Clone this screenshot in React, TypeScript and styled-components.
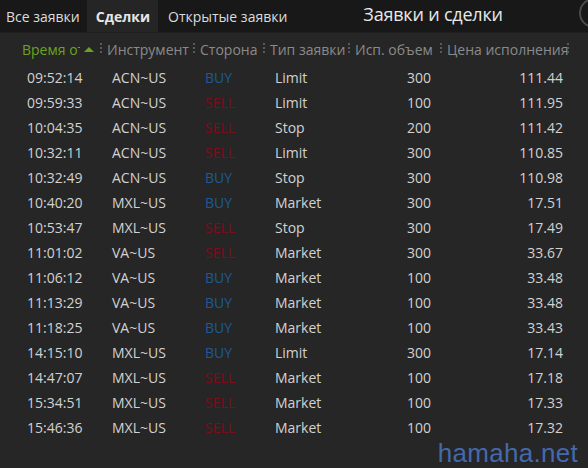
import styled, { createGlobalStyle } from 'styled-components';

type Side = 'BUY' | 'SELL';
type Trade = [string, string, Side, string, number, string];

const trades: Trade[] = [
  ['09:52:14', 'ACN~US', 'BUY', 'Limit', 300, '111.44'],
  ['09:59:33', 'ACN~US', 'SELL', 'Limit', 100, '111.95'],
  ['10:04:35', 'ACN~US', 'SELL', 'Stop', 200, '111.42'],
  ['10:32:11', 'ACN~US', 'SELL', 'Limit', 300, '110.85'],
  ['10:32:49', 'ACN~US', 'BUY', 'Stop', 300, '110.98'],
  ['10:40:20', 'MXL~US', 'BUY', 'Market', 300, '17.51'],
  ['10:53:47', 'MXL~US', 'SELL', 'Stop', 300, '17.49'],
  ['11:01:02', 'VA~US', 'SELL', 'Market', 300, '33.67'],
  ['11:06:12', 'VA~US', 'BUY', 'Market', 100, '33.48'],
  ['11:13:29', 'VA~US', 'BUY', 'Market', 100, '33.48'],
  ['11:18:25', 'VA~US', 'BUY', 'Market', 100, '33.43'],
  ['14:15:10', 'MXL~US', 'BUY', 'Limit', 300, '17.14'],
  ['14:47:07', 'MXL~US', 'SELL', 'Market', 100, '17.18'],
  ['15:34:51', 'MXL~US', 'SELL', 'Market', 100, '17.33'],
  ['15:46:36', 'MXL~US', 'SELL', 'Market', 100, '17.32'],
];

const COLS = '17px 85px 93px 70px 85px 92px 127px';

const GlobalStyles = createGlobalStyle`
  body {
    margin: 0;
    background: #262626;
    font-family: 'Open Sans', 'Noto Sans', sans-serif;
  }
`;

function App() {
  return (
    <>
      <GlobalStyles />
      <Screen>
        <TopBar>
          <Tab first>Все заявки</Tab>
          <Tab active>Сделки</Tab>
          <Tab>Открытые заявки</Tab>
          <Title>Заявки и сделки</Title>
          <CircleButton />
        </TopBar>

        <HeaderRow>
          <span />
          <HeadCell sorted>
            <HeadText>Время от</HeadText>
            <SortArrow />
          </HeadCell>
          <HeadCell>Инструмент</HeadCell>
          <HeadCell>Сторона</HeadCell>
          <HeadCell>Тип заявки</HeadCell>
          <HeadCell>Исп. объем</HeadCell>
          <HeadCell>Цена исполнения</HeadCell>
        </HeaderRow>

        {trades.map(([time, sym, side, type, qty, price]) => (
          <Row key={time}>
            <span />
            <Cell>{time}</Cell>
            <Cell>{sym}</Cell>
            <SideCell side={side}>{side}</SideCell>
            <Cell>{type}</Cell>
            <NumCell gap={11}>{qty}</NumCell>
            <NumCell gap={6}>{price}</NumCell>
          </Row>
        ))}

        <Watermark>hamaha.net</Watermark>
      </Screen>
    </>
  );
}

const Screen = styled.div`
  position: relative;
  width: 588px;
  height: 468px;
  overflow: hidden;
  background: #262626;
`;

const TopBar = styled.div`
  display: flex;
  align-items: stretch;
  height: 32px;
  background: #181818;
  border-bottom: 1px solid #1f1f1f;
`;

const Tab = styled.div<{ active?: boolean; first?: boolean }>`
  display: flex;
  align-items: center;
  padding: 0 ${(p) => (p.active ? 8 : 7)}px 0 ${(p) => (p.first ? 6 : p.active ? 9 : 10)}px;
  font-size: 14px;
  font-weight: ${(p) => (p.active ? 700 : 400)};
  color: ${(p) => (p.active ? '#e6e6e6' : '#dcdcdc')};
  background: ${(p) => (p.active ? '#252525' : 'transparent')};
`;

const Title = styled.div`
  display: flex;
  align-items: center;
  margin-left: 69px;
  padding-bottom: 5px;
  font-size: 18px;
  letter-spacing: -0.2px;
  color: #e8e8e8;
`;

const CircleButton = styled.div`
  width: 30px;
  height: 30px;
  margin: -2px -21px 0 auto;
  border: 2px solid #4a4a4a;
  border-radius: 50%;
  box-sizing: border-box;
`;

const HeaderRow = styled.div`
  display: grid;
  grid-template-columns: ${COLS};
  height: 32px;
  align-items: center;
`;

const HeadCell = styled.div<{ sorted?: boolean }>`
  position: relative;
  display: flex;
  align-items: center;
  padding: 0 0 0 5px;
  font-size: 14px;
  white-space: nowrap;
  color: ${(p) => (p.sorted ? '#6aa321' : '#8a8a8a')};

  &::after {
    content: '';
    position: absolute;
    right: 0;
    top: 50%;
    margin-top: -6px;
    width: 2px;
    height: 12px;
    background: repeating-linear-gradient(
      to bottom,
      #5a5a5a 0 2px,
      transparent 2px 4px
    );
  }
`;

const HeadText = styled.span`
  display: inline-block;
  width: 58px;
  overflow: hidden;
  white-space: nowrap;
`;

const SortArrow = styled.span`
  margin-left: 4px;
  width: 0;
  height: 0;
  border-left: 5px solid transparent;
  border-right: 5px solid transparent;
  border-bottom: 5px solid #6aa321;
`;

const Row = styled.div`
  display: grid;
  grid-template-columns: ${COLS};
  height: 25px;
  align-items: center;
`;

const Cell = styled.div`
  padding-left: 10px;
  font-size: 14px;
  color: #d2d2d2;
  white-space: nowrap;
`;

const SideCell = styled(Cell)<{ side: Side }>`
  color: ${(p) => (p.side === 'BUY' ? '#1d5a93' : '#7d0d1a')};
`;

const NumCell = styled(Cell)<{ gap: number }>`
  padding-left: 0;
  padding-right: ${(p) => p.gap}px;
  text-align: right;
`;

const Watermark = styled.div`
  position: absolute;
  right: 10px;
  bottom: -1px;
  font-family: 'Liberation Sans', Arial, sans-serif;
  font-size: 26px;
  color: #4469ad;
  letter-spacing: 0.3px;
`;

export default App;
